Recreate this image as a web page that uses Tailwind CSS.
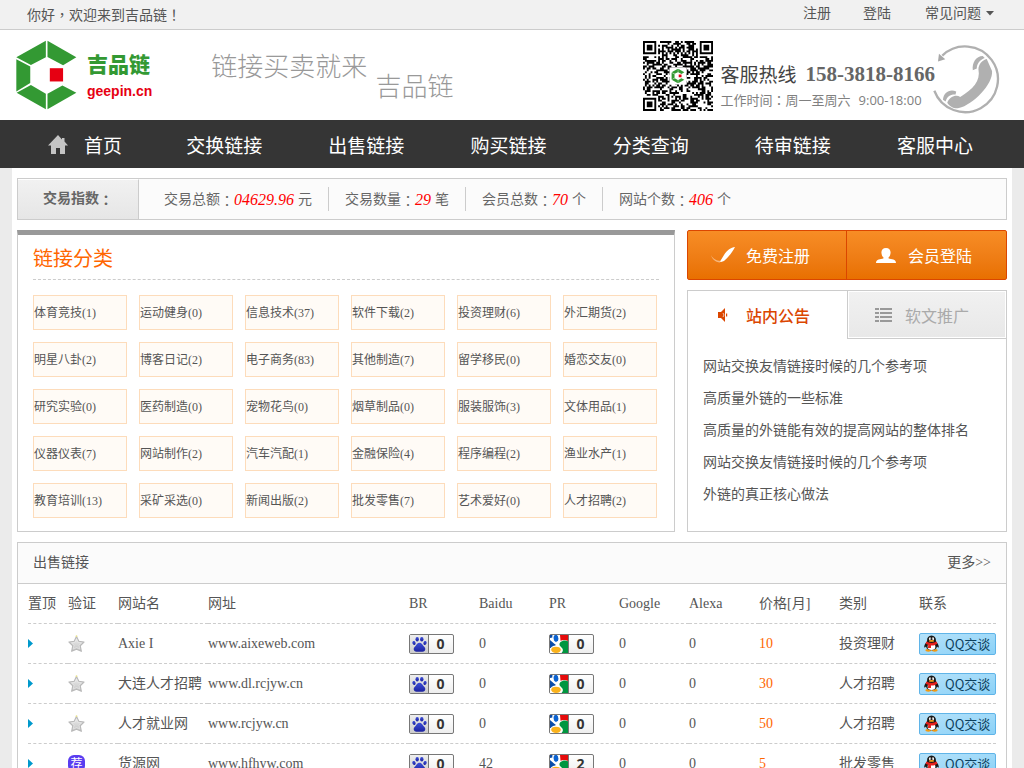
<!DOCTYPE html>
<html lang="zh-CN">
<head>
<meta charset="utf-8">
<meta name="viewport" content="width=device-width, initial-scale=1">
<title>吉品链</title>
<script src="https://cdn.jsdelivr.net/npm/@tailwindcss/browser@4"></script>
</head>
<body class="bg-[#ebebeb] font-['Liberation_Serif','Noto_Sans_CJK_SC',serif] text-sm text-[#555]">

<svg class="absolute size-0" aria-hidden="true">
  <defs>
    <linearGradient id="silver" x1="0" y1="0" x2="0" y2="1"><stop offset="0" stop-color="#eeeeee"/><stop offset="1" stop-color="#c4c4c4"/></linearGradient>
    <linearGradient id="paw-blue" x1="0" y1="0" x2="0" y2="1"><stop offset="0" stop-color="#3d4fd8"/><stop offset="1" stop-color="#1c22a0"/></linearGradient>
  </defs>
  <symbol id="mark" viewBox="45 118 190 215">
    <path fill="#339933" d="M49 172 138 122V172L93 195ZM143 122 230 172 190 196 143 171ZM49 178 91 200V250L49 275ZM50 279 93 256 138 282V329ZM143 329V282L188 257 230 279Z"/>
    <path fill="#e60012" d="M150 205h40v40h-40z"/>
  </symbol>
  <symbol id="paw" viewBox="0 0 18 18">
    <g fill="url(#paw-blue)">
      <ellipse cx="7.200" cy="4.200" rx="1.700" ry="2.300"/><ellipse cx="11.800" cy="4.200" rx="1.700" ry="2.300"/>
      <ellipse cx="4" cy="8" rx="1.600" ry="2" transform="rotate(-20 4 8)"/><ellipse cx="15" cy="8" rx="1.600" ry="2" transform="rotate(20 15 8)"/>
      <path d="M9.500 7.800c2 0 2.700 1.800 4 3.200 1.500 1.500 2.200 2.400 1.600 4.100-.7 1.900-2.600 1.700-5.600 1.700s-4.900.2-5.600-1.700c-.6-1.700.1-2.600 1.600-4.100 1.300-1.400 2-3.200 4-3.200Z"/>
    </g>
  </symbol>
  <symbol id="goog" viewBox="0 0 18 18">
    <path fill="#fff" d="M0 0h18v18H0z"/>
    <path fill="#0a4ca8" d="M0 5l4 3.500 2 1.500c-1.500 1-1.500 2-1 3H0z"/>
    <path fill="#0a4ca8" d="M0 0h2.500v2.500L0 3z"/>
    <path fill="#e50b0b" d="M10 0h8v6c-2.500-1.200-5-1.200-7.500-.2z"/>
    <path fill="#00963f" d="M18 6.200V18h-6.500c2-2 2-4-.5-6-2-1.500-2-3.500-.5-5 2.200-2 5.200-2 7.500-.8z"/>
    <ellipse cx="6" cy="3.300" rx="2.900" ry="4" fill="#0b62d0" stroke="#fff" stroke-width="1" transform="rotate(-8 6 3.300)"/>
    <ellipse cx="6" cy="14.800" rx="5.400" ry="3.700" fill="#fbb31c" stroke="#fff" stroke-width="1.200"/>
  </symbol>
  <symbol id="star" viewBox="0 0 17 18">
    <path d="M8.500 1.500 10.800 6.300 16 7 12.200 10.700 13.300 16.300 8.500 14.300 3.700 16.300 4.800 10.700 1 7 6.200 6.300Z" fill="url(#silver)" stroke="#b9b9b9" stroke-width="1.200" stroke-linejoin="round"/>
    <path d="M8.500 4 9.900 7.200 13.500 7.800 11 10.300 11.700 14 8.500 12.500 5.300 14 6 10.300 3.500 7.800 7.100 7.200Z" fill="none" stroke="#eee" stroke-width=".5"/>
    <circle cx="8.500" cy="1.200" r=".9" fill="#e8e08c"/>
  </symbol>
  <symbol id="penguin" viewBox="0 0 16 17">
    <ellipse cx="4.800" cy="15.300" rx="3" ry="1.400" fill="#f39a12"/><ellipse cx="11.200" cy="15.300" rx="3" ry="1.400" fill="#f39a12"/>
    <path fill="#191919" d="M8 .4C5 .4 3.600 2.600 3.600 5v1.500C2 8 .7 10 .7 12c0 .9.600.9 1.800-.5C3 14 5 15.300 8 15.300s5-1.300 5.500-3.800c1.200 1.400 1.800 1.400 1.800.5 0-2-1.300-4-2.900-5.500V5C12.400 2.600 11 .4 8 .4Z"/>
    <ellipse cx="8" cy="11.700" rx="3.900" ry="3.200" fill="#fff"/>
    <ellipse cx="6.500" cy="3.700" rx="1.100" ry="1.500" fill="#fff"/><ellipse cx="9.500" cy="3.700" rx="1.100" ry="1.500" fill="#fff"/>
    <circle cx="6.800" cy="3.900" r=".5"/><circle cx="9.200" cy="3.900" r=".5"/>
    <ellipse cx="8" cy="5.900" rx="2.600" ry=".9" fill="#f9a51a"/>
    <path fill="#e5201c" d="M2.800 6.500c3.300 1.900 7.100 1.900 10.400 0l.6 2.200c-2.200 1.600-4.300 1.800-6.300 1.700v2.600H4.500l.2-3.100-2.500-1.200z"/>
  </symbol>
</svg>

<div class="border-b border-[#ccc] bg-[#f1f1f1]">
  <div class="flex h-[29px] items-center justify-between pl-[27px] pr-[31px]">
    <p>你好<span class="font-['Noto_Sans_CJK_TC',sans-serif]" lang="zh-TW">，</span>欢迎来到吉品链<span class="font-['Noto_Sans_CJK_TC',sans-serif]" lang="zh-TW">！</span></p>
    <div class="flex items-center gap-8 pb-0.5">
      <a href="#">注册</a>
      <a href="#">登陆</a>
      <a href="#" class="flex items-center gap-1 pl-0.5">常见问题
        <svg class="-mr-0.5 h-[5px] w-[10px]" viewBox="0 0 10 5"><path fill="#555" d="M1 0h8L5 4.500z"/></svg>
      </a>
    </div>
  </div>
</div>

<header class="flex h-[90px] bg-white pl-[15px] pr-[23px]">
  <a href="#" class="flex gap-[9px] pt-[9px]">
    <svg class="h-[72px] w-[63px]"><use href="#mark"/></svg>
    <span class="flex flex-col gap-1 pt-[10px] font-['Noto_Sans_CJK_SC',sans-serif]">
      <span class="text-[21px] leading-7 font-black text-[#339933]">吉品链</span>
      <span class="font-['Liberation_Sans',sans-serif] text-sm leading-5 font-bold text-[#e60012]">geepin.cn</span>
    </span>
  </a>
  <p class="ml-[59px] flex gap-2 font-['Noto_Sans_CJK_SC',sans-serif] text-[26px] leading-8 font-light text-[#999]">
    <span class="pt-[19px]">链接买卖就来</span>
    <span class="pt-[39px]">吉品链</span>
  </p>
  <div class="ml-auto flex">
    <svg id="qr" class="mt-[11px] size-[70px]" viewBox="0 0 37 37" role="img" aria-label="二维码">
      <path id="qr-modules" fill="#000"/>
      <path fill="#fff" d="M14 14h9v9h-9z"/>
      <svg x="14.500" y="14.500" width="8" height="8"><use href="#mark"/></svg>
    </svg>
    <div class="ml-[7px] pt-[30px] font-['Noto_Sans_CJK_SC',sans-serif]">
      <p class="flex items-center gap-[9px] leading-7 text-[#444]"><span class="text-[19px]">客服热线</span><span class="font-['Liberation_Serif',serif] text-[21px] font-bold text-[#666]">158-3818-8166</span></p>
      <p class="flex items-center gap-2 text-[13px] leading-6 text-[#808080]"><span>工作时间<span class="font-['Noto_Sans_CJK_TC',sans-serif]" lang="zh-TW">：</span>周一至周六</span><span class="font-['Open_Sans',sans-serif]">9:00-18:00</span></p>
    </div>
    <svg class="-ml-0.5 mt-[14px] h-[71px] w-[68px]" viewBox="880 130 205 212">
      <path d="M908 164A99 99 0 1 1 884 270" fill="none" stroke="#b0b0b0" stroke-width="7"/>
      <path fill="#a8a8a8" d="M898 158 895 182 917 175Z"/>
      <path fill="#b0b0b0" d="M1030 165C1010 165 997 185 1000 208L1012 203C1012 188 1022 176 1036 171ZM1042 174C1028 178 1017 190 1017 206 1024 240 1000 266 962 289 950 280 930 288 923 306 930 318 945 325 958 322 1000 312 1062 250 1058 210ZM910 297C912 275 930 264 950 272L948 281C932 280 922 288 918 302Z"/>
    </svg>
  </div>
</header>

<nav class="grid h-12 grid-cols-7 items-center bg-[#353535] pl-[11px] pr-[18px] pt-0.5 font-['Noto_Sans_CJK_SC',sans-serif] text-[19px] text-white">
  <a href="#" class="flex items-center justify-center gap-4 pl-[7px]">
    <svg class="-ml-px size-5" viewBox="0 0 20 20"><path fill="#c4c4c4" d="M10 0 0 10.500h3V19h5v-6h4v6h5v-8.500h3L16.500 6.500V3H14v1.500z"/></svg>首页</a>
  <a href="#" class="text-center">交换链接</a>
  <a href="#" class="text-center">出售链接</a>
  <a href="#" class="text-center">购买链接</a>
  <a href="#" class="text-center">分类查询</a>
  <a href="#" class="text-center">待审链接</a>
  <a href="#" class="text-center">客服中心</a>
</nav>

<main class="mx-auto max-w-[1000px] bg-white px-[5px] pt-[10px] pb-[10px]">
  <section class="flex h-[42px] items-stretch border border-[#ccc] bg-[#fbfbfb] text-[#666]">
    <h2 class="flex w-[121px] items-center justify-center border-r border-t border-r-[#ccc] border-t-white bg-linear-to-b from-[#f1f1f1] to-[#e6e6e6] pb-0.5 font-bold">交易指数<span class="font-['Noto_Sans_CJK_TC',sans-serif]" lang="zh-TW">：</span></h2>
    <ul id="stats" class="flex items-center pl-[9px]"></ul>
  </section>

  <div class="mt-[10px] flex gap-3">
    <section class="flex-1 border border-t-[5px] border-[#ccc] border-t-[#999] px-[15px] pb-[13px]">
      <h2 class="h-[45px] border-b border-dashed border-[#ccc] text-xl leading-[48px] text-[#ff6600]">链接分类</h2>
      <ul id="cats" class="grid grid-cols-6 gap-3 pt-[15px] pr-0.5 text-xs leading-[31px]"></ul>
    </section>

    <aside class="flex w-[320px] flex-col gap-[10px] font-['Noto_Sans_CJK_SC',sans-serif]">
      <div class="flex h-[50px] rounded-xs border border-[#db4600] bg-linear-to-b from-[#f78d25] to-[#e87000] text-base text-white">
        <a href="#" class="flex w-1/2 items-center gap-[11px] border-r border-[#db4600] pl-[23px]">
          <svg class="h-[18px] w-6" viewBox="0 0 24 18"><path fill="#fff" opacity=".45" d="M0 9c2 4 5 5.500 10 6l-1 1.500C4 16 1 13 0 9z"/><path fill="#fff" d="M24 1c-4 .5-8 3-11 8l-4 6.500 1 .5 3-1C17 11.500 21 7 24 1z"/></svg>免费注册</a>
        <a href="#" class="flex w-1/2 items-center gap-3 pl-[29px]">
          <svg class="h-[17px] w-5" viewBox="0 0 20 17"><path fill="#fff" d="M10 1c-3 0-4.600 2-4.600 4.600 0 2 .8 3.700 2 4.700v1.200C4.500 12 0 12.300 0 16h20c0-3.700-4.500-4-7.400-4.500v-1.200c1.200-1 2-2.700 2-4.700C14.600 3 13 1 10 1z"/></svg>会员登陆</a>
      </div>
      <section class="flex-1 border border-[#ccc]">
        <div class="flex h-12 text-base">
          <button type="button" class="flex w-1/2 items-center gap-[17px] pl-[29px] font-medium text-[#db4600]">
            <svg class="h-[14px] w-3" viewBox="0 0 12 14"><path fill="#db4600" d="M1 4h3l4-4v14l-4-4H1zM9 5.500h1.200v3H9z"/><path stroke="#fff" stroke-width=".7" fill="none" d="m6 5 1 2-1 2"/></svg>站内公告</button>
          <button type="button" class="flex w-1/2 items-center gap-[13px] border-b border-l border-[#ccc] bg-linear-to-b from-[#f1f1f1] to-[#e8e8e8] pl-[27px] text-[#aaa] inset-ring inset-ring-white">
            <svg class="h-[14px] w-[17px]" viewBox="0 0 17 14"><path stroke="#999" stroke-width="2" d="M0 1h4M0 5h4M0 9h4M0 13h4M5 1h12M5 5h12M5 9h12M5 13h12"/></svg>软文推广</button>
        </div>
        <ul class="px-[15px] pt-3 font-['Liberation_Serif','Noto_Sans_CJK_SC',serif] text-sm leading-8">
          <li><a href="#">网站交换友情链接时候的几个参考项</a></li>
          <li><a href="#">高质量外链的一些标准</a></li>
          <li><a href="#">高质量的外链能有效的提高网站的整体排名</a></li>
          <li><a href="#">网站交换友情链接时候的几个参考项</a></li>
          <li><a href="#">外链的真正核心做法</a></li>
        </ul>
      </section>
    </aside>
  </div>

  <section class="mt-[10px] border border-[#ccc]">
    <div class="flex h-[41px] items-center justify-between border-b border-[#ccc] bg-[#fbfbfb] px-[15px]">
      <h2>出售链接</h2><a href="#">更多&gt;&gt;</a>
    </div>
    <div class="px-[10px]">
      <table class="w-full table-fixed border-separate border-spacing-0 text-left">
        <colgroup>
          <col class="w-10"><col class="w-[50px]"><col class="w-[90px]"><col>
          <col class="w-[70px]"><col class="w-[70px]"><col class="w-[70px]"><col class="w-[70px]"><col class="w-[70px]">
          <col class="w-20"><col class="w-20"><col class="w-[77px]">
        </colgroup>
        <thead><tr class="h-10 *:border-b *:border-dashed *:border-[#ccc] *:font-normal *:whitespace-nowrap">
          <th>置顶</th><th>验证</th><th>网站名</th><th>网址</th><th>BR</th><th>Baidu</th><th>PR</th><th>Google</th><th>Alexa</th><th>价格[月]</th><th>类别</th><th>联系</th>
        </tr></thead>
        <tbody id="rows"></tbody>
      </table>
    </div>
  </section>
</main>

<script>
  const stats = [['交易总额', '04629.96', '元'], ['交易数量', '29', '笔'], ['会员总数', '70', '个'], ['网站个数', '406', '个']];
  document.getElementById('stats').innerHTML = stats.map(([label, n, unit]) =>
    `<li class="flex h-6 items-center border-r border-[#ccc] px-4 pt-px whitespace-pre last:border-r-0">${label}<span class="font-['Noto_Sans_CJK_TC',sans-serif]" lang="zh-TW">：</span><i class="text-base text-[#f00]">${n} </i>${unit}</li>`).join('');

  const cats = ['体育竞技(1)','运动健身(0)','信息技术(37)','软件下载(2)','投资理财(6)','外汇期货(2)',
    '明星八卦(2)','博客日记(2)','电子商务(83)','其他制造(7)','留学移民(0)','婚恋交友(0)',
    '研究实验(0)','医药制造(0)','宠物花鸟(0)','烟草制品(0)','服装服饰(3)','文体用品(1)',
    '仪器仪表(7)','网站制作(2)','汽车汽配(1)','金融保险(4)','程序编程(2)','渔业水产(1)',
    '教育培训(13)','采矿采选(0)','新闻出版(2)','批发零售(7)','艺术爱好(0)','人才招聘(2)'];
  document.getElementById('cats').innerHTML = cats.map(c =>
    `<li><a href="#" class="block border border-[#fddcbb] bg-[#fffbf6] pt-0.5 whitespace-nowrap">${c}</a></li>`).join('');

  const badge = (icon, n) => `<span class="flex h-5 w-[45px] rounded-xs border border-[#777] bg-linear-to-b from-white to-[#eee] font-['Open_Sans',sans-serif] text-sm leading-[18px] font-bold text-[#333]">
    <span class="w-[19px] border-r border-[#777] bg-linear-to-b from-[#eee] to-[#ccc]"><svg class="h-[18px] w-[18px]"><use href="#${icon}"/></svg></span><span class="flex-1 pr-px text-center">${n}</span></span>`;
  const star = '<svg class="h-[18px] w-[17px]"><use href="#star"/></svg>';
  const rec = `<span class="flex size-[17px] items-center justify-center rounded-md bg-[#5a3df0] text-xs leading-none text-white">荐</span>`;
  const rows = [
    [star,'Axie I','www.aixeweb.com',0,0,0,10,'投资理财'],
    [star,'大连人才招聘','www.dl.rcjyw.cn',0,0,0,30,'人才招聘'],
    [star,'人才就业网','www.rcjyw.cn',0,0,0,50,'人才招聘'],
    [rec,'货源网','www.hfhyw.com',0,42,2,5,'批发零售']];
  document.getElementById('rows').innerHTML = rows.map(([v, name, url, br, baidu, pr, price, cat]) =>
    `<tr class="h-10 *:border-b *:border-dashed *:border-[#ccc] *:p-0 *:whitespace-nowrap">
      <td><svg class="h-[9px] w-[5px]" viewBox="0 0 5 9"><path fill="#0099cc" d="M0 0 5 4.500 0 9z"/></svg></td>
      <td>${v}</td><td><a href="#">${name}</a></td><td><a href="#">${url}</a></td>
      <td>${badge('paw', br)}</td><td>${baidu}</td><td>${badge('goog', pr)}</td><td>0</td><td>0</td>
      <td class="text-[#ff6600]">${price}</td><td>${cat}</td>
      <td><a href="#" class="flex h-[22px] items-center gap-[5px] rounded-xs border border-[#5fb4e8] bg-linear-to-br from-[#b5e2fa] to-[#8ad1f7] pl-[3px] font-['Noto_Sans_CJK_SC',sans-serif] text-[13px] leading-5 text-[#0c3f5c]"><svg class="h-[17px] w-[17px]"><use href="#penguin"/></svg>QQ交谈</a></td>
    </tr>`).join('');

  // QR modules: three finder squares, timing lines and a seeded fill
  let seed = 20151, d = '';
  const rnd = () => (seed = (seed * 1103515245 + 12345) % 2147483648) / 2147483648;
  const finder = (x, y) => {
    for (const [ox, oy] of [[0, 0], [30, 0], [0, 30]]) {
      const i = x - ox, j = y - oy;
      if (i >= -1 && i <= 7 && j >= -1 && j <= 7) {
        const r = Math.max(Math.abs(i - 3), Math.abs(j - 3));
        return r === 3 || r < 2 ? 1 : 0;
      }
    }
    return -1;
  };
  for (let y = 0; y < 37; y++) for (let x = 0; x < 37; x++) {
    const f = finder(x, y);
    const on = f >= 0 ? f : (x === 6 || y === 6) ? (x + y + 1) % 2 : rnd() < 0.55;
    if (on) d += `M${x} ${y}h1v1h-1z`;
  }
  document.getElementById('qr-modules').setAttribute('d', d);
</script>
</body>
</html>
